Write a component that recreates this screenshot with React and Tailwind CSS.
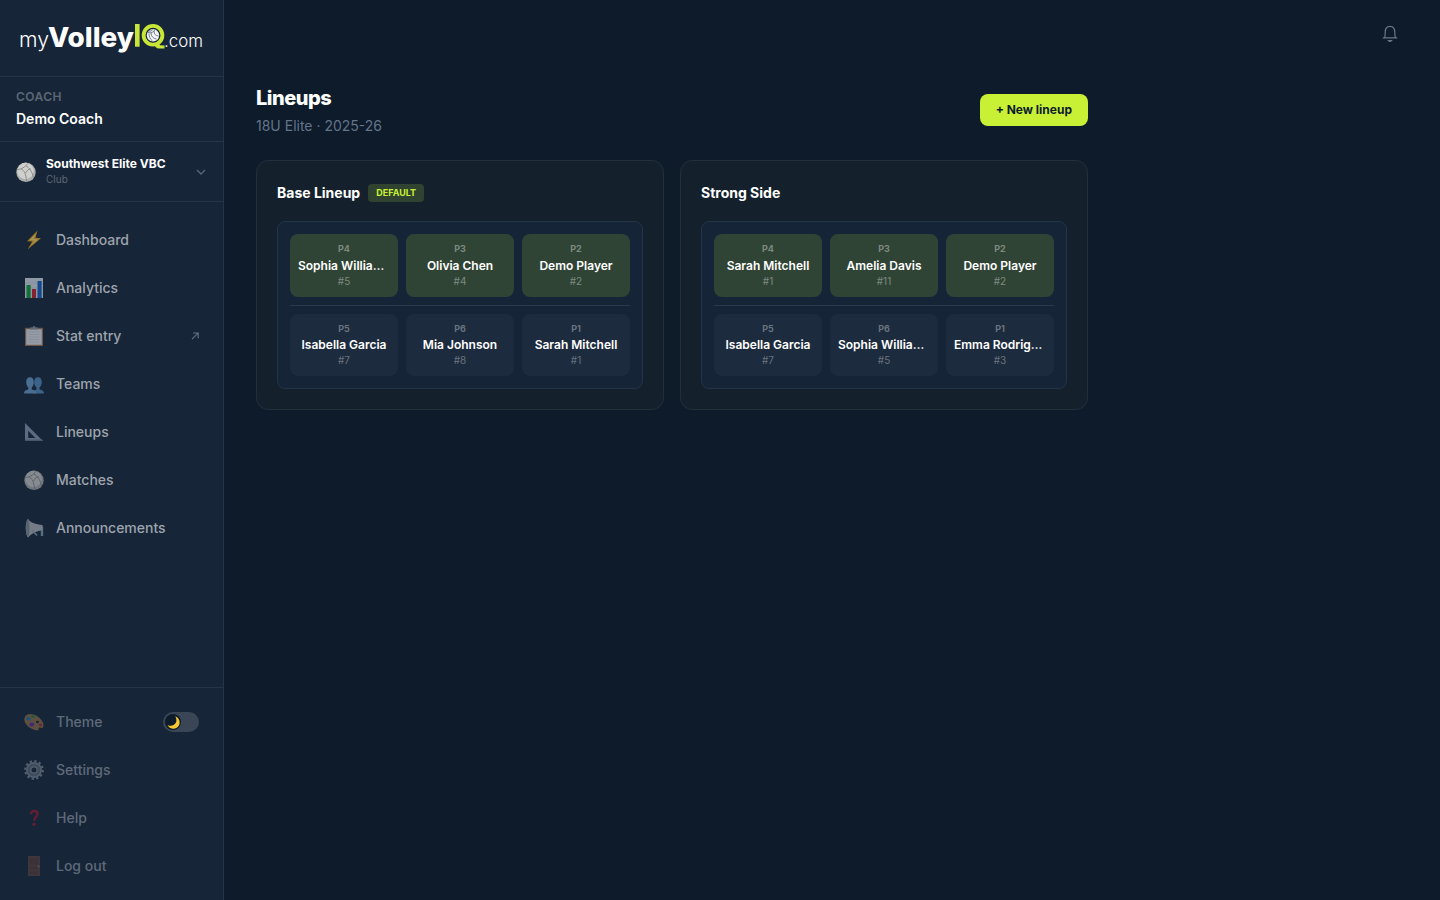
import React from 'react'

const navItems = [
  { label: 'Dashboard', icon: 'bolt' },
  { label: 'Analytics', icon: 'chart' },
  { label: 'Stat entry', icon: 'clipboard', external: true },
  { label: 'Teams', icon: 'people' },
  { label: 'Lineups', icon: 'triangle' },
  { label: 'Matches', icon: 'ball' },
  { label: 'Announcements', icon: 'megaphone' },
]

const lineups = [
  {
    name: 'Base Lineup',
    isDefault: true,
    front: [
      { pos: 'P4', name: 'Sophia Williams', number: 5 },
      { pos: 'P3', name: 'Olivia Chen', number: 4 },
      { pos: 'P2', name: 'Demo Player', number: 2 },
    ],
    back: [
      { pos: 'P5', name: 'Isabella Garcia', number: 7 },
      { pos: 'P6', name: 'Mia Johnson', number: 8 },
      { pos: 'P1', name: 'Sarah Mitchell', number: 1 },
    ],
  },
  {
    name: 'Strong Side',
    isDefault: false,
    front: [
      { pos: 'P4', name: 'Sarah Mitchell', number: 1 },
      { pos: 'P3', name: 'Amelia Davis', number: 11 },
      { pos: 'P2', name: 'Demo Player', number: 2 },
    ],
    back: [
      { pos: 'P5', name: 'Isabella Garcia', number: 7 },
      { pos: 'P6', name: 'Sophia Williams', number: 5 },
      { pos: 'P1', name: 'Emma Rodriguez', number: 3 },
    ],
  },
]

const Volleyball = () => (
  <>
    <circle cx="10" cy="10.300" r="9.7" fill="#adadab" />
    <circle cx="9.5" cy="9" r="8.300" fill="#cfcfcd" />
    <path
      d="M1 7.500C5 7.500 8.500 5.500 12.500 1M5 6.800c3 1.500 5 5 5.500 12M10 4c3 1.500 6 5 7.500 11.500M9.800 11c1-2.500 2.500-4 4.800-4.300"
      fill="none"
      stroke="#858584"
      strokeWidth=".9"
    />
  </>
)

const glyphs = {
  bolt: (
    <>
      <path d="M13.500.5 3 11.300l5.200.2L3.500 19.500 17 8.200l-5.500-.4z" fill="#f5a914" />
      <path d="M12 3.500 5.500 10.200l5 .2L7 15.500l7-6-4.500-.7z" fill="#ffe27a" />
    </>
  ),
  chart: (
    <>
      <path d="M1 0h18v20H1z" fill="#dfe7ee" />
      <path d="M1 5h18M1 10h18M1 15h18" stroke="#c6d1db" strokeWidth=".6" />
      <path d="M2.500 7h4.200v13H2.500z" fill="#12a33b" />
      <path d="M8 11h4v9H8z" fill="#d01f2e" />
      <path d="M13.500 3h4.200v17h-4.200z" fill="#1663c7" />
    </>
  ),
  clipboard: (
    <>
      <path d="M1 1.800h18V20H1z" fill="#a8744f" />
      <path d="M2.200 3.200h15.600v15.600H2.200z" fill="#e9ecef" />
      <path d="M4.500 6h11M4.500 8.500h11M4.500 11h11M4.500 13.500h11M4.500 16h11" stroke="#ccd1d6" strokeWidth=".8" />
      <path d="M6 1.500h2.500a1.500 1.500 0 0 1 3 0H14v2H6z" fill="#8e979f" />
    </>
  ),
  people: (
    <>
      <path
        d="M9.600 19.500H20c0-2.500-1.500-3.300-4.500-4v-2c1.500-1.200 2.300-3 2.300-5.500 0-3-1.400-4.700-3.800-4.700S10.200 5 10.200 8c0 2.500.8 4.300 2.300 5.500v2c-2 .7-2.900 1.500-2.900 4z"
        fill="#548bbd"
      />
      <path
        d="M0 19.500h12c0-2.500-1.500-3.300-4.300-4v-2C9 12.300 9.800 10.500 9.800 8c0-3-1.400-4.700-3.800-4.700S2.200 5 2.200 8c0 2.500.8 4.300 2.100 5.500v2C1.500 16.200 0 17 0 19.500z"
        fill="#6ca0ce"
      />
    </>
  ),
  triangle: (
    <>
      <path fillRule="evenodd" d="M1 1v18h18zM4.200 8.800l7.200 7.200H4.200z" fill="#8c9bb4" />
      <path d="M1 18.300h18" stroke="#66758f" strokeWidth="1.200" />
    </>
  ),
  ball: <Volleyball />,
  megaphone: (
    <>
      <path d="M14 8.500h5.200V18h-2.400v-5.500L14 13z" fill="#7fa0b4" />
      <path d="M4 .8C5.500 4.500 12 6.500 18.500 7v5C12 13.500 6.500 16 4.200 19.500 1.500 18 .6 5 4 .8z" fill="#b1b7bc" />
      <path d="M4 .8C1 4 .8 16 4.200 19.500 6 15 6 5 4 .8z" fill="#858e96" />
      <path d="M8 12l5 5.500" stroke="#9aa4ac" strokeWidth="1.500" />
    </>
  ),
  palette: (
    <>
      <path d="M.4 6.500C1 2 6 .8 11 3c4.500 2 8.600 6.500 8.500 10.500-.1 2.200-1.500 3-2.800 2.300-1.200-.7-2.200-.4-2 .7.300 1.500-.8 2-2.500 1.700C6 17-.4 12 .4 6.500z" fill="#c98e4c" />
      <ellipse cx="4.500" cy="6.800" rx="2.200" ry="1.800" fill="#1b9ad8" />
      <ellipse cx="9" cy="4.600" rx="2" ry="1.400" fill="#26ad45" />
      <ellipse cx="7.800" cy="12.500" rx="2.400" ry="1.900" fill="#7a2fd0" />
      <ellipse cx="13.500" cy="10" rx="1.600" ry="1.300" fill="#172538" />
      <ellipse cx="16.500" cy="13" rx="1.600" ry="1.300" fill="#d0303a" />
    </>
  ),
  gear: (
    <>
      <circle cx="10" cy="10" r="8.800" fill="none" stroke="#a9b4be" strokeWidth="2.200" strokeDasharray="2.300 2.307" />
      <circle cx="10" cy="10" r="7" fill="none" stroke="#a9b4be" strokeWidth="2" />
      <circle cx="10" cy="10" r="4.600" fill="none" stroke="#7c8995" strokeWidth="3.200" />
      <circle cx="10" cy="10" r="3.100" fill="none" stroke="#a9b4be" strokeWidth="1.200" />
    </>
  ),
  question: (
    <>
      <path d="M7 6.200C7.200 3.500 8.500 3 10.300 3c2 0 3.200 1.200 3.200 3 0 2.800-3.300 3.200-3.300 6.700" fill="none" stroke="#d2142c" strokeWidth="2.500" />
      <circle cx="10" cy="16.300" r="1.700" fill="#d2142c" />
    </>
  ),
  door: (
    <>
      <path d="M4 0h12v20H4z" fill="#7d503f" />
      <path d="M5.800 2h8.400v6.500H5.800zM5.800 11h8.400v2.500H5.800zM5.800 15.500h8.400v2.500H5.800z" fill="#6e4638" />
      <circle cx="14.600" cy="10.500" r=".9" fill="#c99d3d" />
    </>
  ),
}

const Glyph = ({ name, className = '' }) => (
  <svg className={`w-5 h-5 shrink-0 ${className}`} viewBox="0 0 20 20">
    {glyphs[name]}
  </svg>
)

const Logo = () => (
  <svg className="w-[192px] h-9" viewBox="-4 0 192 36" fontFamily="Inter, sans-serif">
    <text x="-1" y="26.500" fontWeight="300" fontSize="20.500" textLength="30" lengthAdjust="spacingAndGlyphs" fill="#fff">my</text>
    <text x="28" y="26.500" fontWeight="800" fontSize="27" textLength="86" lengthAdjust="spacingAndGlyphs" fill="#fff">Volley</text>
    <path d="M115 4h4.600v22.700H115z" fill="#c8e637" />
    <path d="M133 23.500l5-1 2 2.700 4.500.3v3h-5.500c-2.500 0-3.800-2-6-5z" fill="#c8e637" />
    <circle cx="133" cy="15.300" r="9.400" fill="#172538" stroke="#c8e637" strokeWidth="3.800" />
    <circle cx="133" cy="15.300" r="6.200" fill="#f3f5f7" />
    <path
      d="M128 12.500c3 1 6-.5 7-3M131 13c0 3 2 5.500 5.500 6M129 13.500c0 3 1 5.500 3.500 7.500M134 11c0 3 1.800 5 4.700 5M128.500 11c2 .5 3.500-.2 4.500-1.700"
      fill="none"
      stroke="#596473"
      strokeWidth=".8"
    />
    <text x="144" y="26.500" fontWeight="300" fontSize="17" textLength="39" lengthAdjust="spacingAndGlyphs" fill="#fff">.com</text>
  </svg>
)

const NavItem = ({ label, icon, external }) => (
  <a className="flex items-center gap-3 h-12 px-3 text-sm font-medium text-[#9da4ad]">
    <Glyph name={icon} className="opacity-60" />
    <span className="flex-1">{label}</span>
    {external && (
      <svg className="w-2 h-2" viewBox="0 0 8 8" fill="none" stroke="#627080" strokeWidth="1.200">
        <path d="M1 7.200 7 1.200M2 1h5.200v5.200" />
      </svg>
    )}
  </a>
)

const FooterItem = ({ label, icon, children }) => (
  <div className="flex items-center gap-3 h-12 px-3 text-sm font-medium text-[#5f6a78]">
    <Glyph name={icon} className="opacity-40" />
    <span className="flex-1">{label}</span>
    {children}
  </div>
)

const ThemeToggle = () => (
  <span className="flex items-center w-9 h-5 px-0.5 rounded-full bg-[#3a4656]">
    <span className="flex items-center justify-center w-4 h-4 rounded-full bg-[#0d1b2a]">
      <svg className="w-[13px] h-[13px]" viewBox="0 0 12 12">
        <path d="M7.500.3C12.500 2 13 8.300 9 10.800 5.800 12.800 1.700 11.300.5 8.200 3 9.700 6.300 9.200 7.800 6.800 9.200 4.700 8.900 2.200 7.500.3z" fill="#f8c92f" />
      </svg>
    </span>
  </span>
)

const Sidebar = () => (
  <aside className="flex flex-col w-56 shrink-0 h-full bg-[#172538] border-r border-[#263546]">
    <div className="h-[77px] pl-4 pt-5 border-b border-[#263546]">
      <Logo />
    </div>
    <div className="h-[65px] px-4 pt-3 border-b border-[#263546]">
      <p className="text-xs leading-4 font-semibold tracking-[0.04em] text-[#5c6775]">COACH</p>
      <p className="mt-1 text-sm font-semibold text-white">Demo Coach</p>
    </div>
    <div className="flex items-center h-[60px] px-4 border-b border-[#263546]">
      <Glyph name="ball" />
      <div className="flex-1 ml-2.5">
        <p className="text-xs leading-4 font-bold text-white">Southwest Elite VBC</p>
        <p className="text-[10px] leading-[15px] text-[#5c6775]">Club</p>
      </div>
      <svg className="w-2.5 h-2.5 mr-px" viewBox="0 0 10 10" fill="none" stroke="#5c6775" strokeWidth="1.300">
        <path d="M1 3l4 4 4-4" />
      </svg>
    </div>
    <nav className="flex-1 px-3 pt-3.5">
      {navItems.map((item) => (
        <NavItem key={item.label} {...item} />
      ))}
    </nav>
    <div className="h-[213px] px-3 pt-2.5 border-t border-[#263546]">
      <FooterItem label="Theme" icon="palette">
        <ThemeToggle />
      </FooterItem>
      <FooterItem label="Settings" icon="gear" />
      <FooterItem label="Help" icon="question" />
      <FooterItem label="Log out" icon="door" />
    </div>
  </aside>
)

const PlayerCell = ({ pos, name, number, front }) => (
  <div className={`min-w-0 p-2 rounded-lg text-center ${front ? 'bg-[#304436] text-[#7d8a80]' : 'bg-[#1d2b3e] text-[#68737f]'}`}>
    <p className="text-[9px] leading-[13.5px] font-bold">{pos}</p>
    <p className="pt-px text-xs leading-[17px] font-semibold text-white truncate">{name}</p>
    <p className="text-[10px] leading-[15px]">#{number}</p>
  </div>
)

const LineupCard = ({ name, isDefault, front, back }) => (
  <div className="p-5 rounded-xl border border-[#22303c] bg-[#14212d]">
    <div className="flex items-center gap-2 h-6 mb-4">
      <h2 className="text-sm font-bold text-white">{name}</h2>
      {isDefault && (
        <span className="px-2 py-0.5 rounded bg-[#304230] text-[9px] leading-[14px] font-bold text-[#c8f135]">DEFAULT</span>
      )}
    </div>
    <div className="p-3 rounded-lg border border-[#243447] bg-[#162438]">
      <div className="grid grid-cols-3 gap-2">
        {front.map((player) => (
          <PlayerCell key={player.pos} {...player} front />
        ))}
      </div>
      <div className="my-2 h-px bg-[#2a384a]" />
      <div className="grid grid-cols-3 gap-2">
        {back.map((player) => (
          <PlayerCell key={player.pos} {...player} />
        ))}
      </div>
    </div>
  </div>
)

export default function App() {
  return (
    <div className="flex h-screen overflow-hidden bg-[#0d1b2a] font-['Inter',sans-serif]">
      <Sidebar />
      <main className="flex-1">
        <header className="flex items-center justify-end h-[68px] pr-10">
          <svg className="w-5 h-5" viewBox="0 0 20 20" fill="none" stroke="#6b7682" strokeWidth="1.200" strokeLinecap="round">
            <path d="M3.200 13.900h13.600M4.500 13.700c.7-1.500.7-3 .7-5.200 0-3.800 1.500-6.200 4.800-6.200s4.800 2.400 4.800 6.200c0 2.200 0 3.700.7 5.200M8.500 16.700c.7.900 2.300.9 3 0z" />
          </svg>
        </header>
        <div className="w-[832px] ml-8 pt-4">
          <div className="flex items-center justify-between h-[52px] mb-6">
            <div>
              <h1 className="text-xl leading-7 font-extrabold tracking-tight text-white">Lineups</h1>
              <p className="mt-1 text-sm text-[#64748b]">18U Elite · 2025-26</p>
            </div>
            <button className="h-8 px-4 rounded-lg bg-[#c8f135] text-xs font-bold text-[#0d1b2a]">+ New lineup</button>
          </div>
          <div className="grid grid-cols-2 gap-4">
            {lineups.map((lineup) => (
              <LineupCard key={lineup.name} {...lineup} />
            ))}
          </div>
        </div>
      </main>
    </div>
  )
}
